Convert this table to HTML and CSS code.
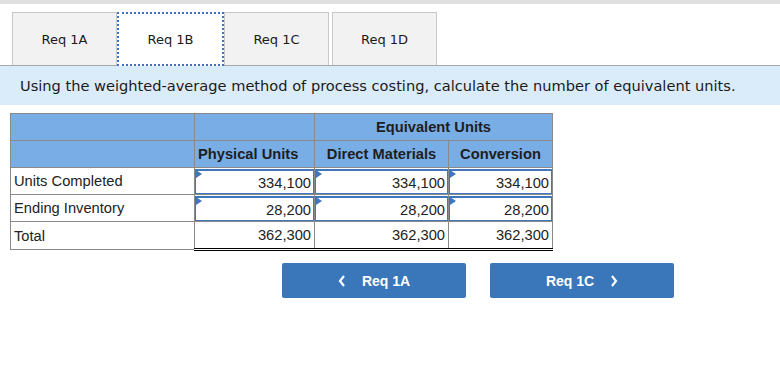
FILE: index.html
```html
<!DOCTYPE html>
<html>
<head>
    <meta charset="UTF-8">
    <title>Req 1B</title>
    <link rel="stylesheet" href="styles.css">
</head>
<body>
    <div class="top-bar"></div>
    <div class="tabs">
        <div class="tab">Req 1A</div>
        <div class="tab active">Req 1B</div>
        <div class="tab">Req 1C</div>
        <div class="tab">Req 1D</div>
    </div>
    <div class="instruction">Using the weighted-average method of process costing, calculate the number of equivalent units.</div>

    <table class="units-table">
        <tr class="head">
            <th class="col-label"></th>
            <th class="col-phys"></th>
            <th colspan="2">Equivalent Units</th>
        </tr>
        <tr class="head">
            <th class="col-label"></th>
            <th class="col-phys">Physical Units</th>
            <th class="col-dm">Direct Materials</th>
            <th class="col-conv">Conversion</th>
        </tr>
        <tr>
            <td class="label">Units Completed</td>
            <td class="entry"><div class="input">334,100</div></td>
            <td class="entry"><div class="input">334,100</div></td>
            <td class="entry"><div class="input">334,100</div></td>
        </tr>
        <tr>
            <td class="label">Ending Inventory</td>
            <td class="entry"><div class="input">28,200</div></td>
            <td class="entry"><div class="input">28,200</div></td>
            <td class="entry"><div class="input">28,200</div></td>
        </tr>
        <tr class="total">
            <td class="label">Total</td>
            <td class="sum">362,300</td>
            <td class="sum">362,300</td>
            <td class="sum">362,300</td>
        </tr>
    </table>

    <div class="nav">
        <button class="nav-btn">
            <svg width="8" height="12" viewBox="0 0 8 12"><polyline points="6,1 2,6 6,11" fill="none" stroke="#fff" stroke-width="2.2"/></svg>
            <span>Req 1A</span>
        </button>
        <button class="nav-btn">
            <span>Req 1C</span>
            <svg width="8" height="12" viewBox="0 0 8 12"><polyline points="2,1 6,6 2,11" fill="none" stroke="#fff" stroke-width="2.2"/></svg>
        </button>
    </div>
</body>
</html>
```

FILE: styles.css
```css
body {
    margin: 0;
    font-family: 'DejaVu Sans', Verdana, sans-serif;
    background-color: #fff;
    color: #222;
}

.top-bar {
    height: 4px;
    background-color: #e0e0e0;
}

.tabs {
    display: flex;
    align-items: flex-start;
    padding: 8px 0 0 12px;
}

.tab {
    width: 103px;
    height: 52px;
    box-sizing: content-box;
    background-color: #f2f2f2;
    border: 1px solid #c8c8c8;
    border-bottom: none;
    display: flex;
    align-items: center;
    justify-content: center;
    font-size: 13px;
    color: #1a1a1a;
}

.tab.active {
    width: 103px;
    height: 50px;
    background-color: #fff;
    border: 2px dotted #3d74bb;
    margin-bottom: -1px;
    position: relative;
    z-index: 1;
}

.tab:nth-child(4) {
    margin-left: 3px;
}

.instruction {
    background-color: #daecf9;
    border-top: 1px solid #a8a8a8;
    height: 39px;
    line-height: 40px;
    padding-left: 20px;
    font-size: 14.6px;
    color: #1a1a1a;
}

.units-table {
    border-collapse: collapse;
    margin: 8px 0 0 10px;
    font-family: 'Liberation Sans', Arial, sans-serif;
    font-size: 14.7px;
}

.units-table th, .units-table td {
    border: 1px solid #8a8a8a;
    height: 26px;
    padding: 0;
}

.units-table th {
    background-color: #79ade5;
    color: #1e1e1e;
    font-weight: bold;
    text-align: center;
}

.units-table th.col-phys {
    text-align: left;
    padding-left: 3px;
}

.col-label { width: 183px; }
.col-phys { width: 116px; }
.col-dm { width: 133px; }
.col-conv { width: 103px; }

.units-table td.label {
    padding-left: 3px;
    color: #222;
}

.input {
    height: 22px;
    line-height: 24px;
    border: 1px solid #3f76bd;
    border-top-width: 2px;
    text-align: right;
    padding-right: 2px;
    color: #222;
    position: relative;
}

.input::before {
    content: '';
    position: absolute;
    left: 0;
    top: -1px;
    border-top: 4px solid transparent;
    border-bottom: 4px solid transparent;
    border-left: 6px solid #3f76bd;
}

.units-table td.sum {
    text-align: right;
    padding-right: 3px;
    border-top: 1px solid #000;
    border-bottom: 3px double #000;
}

.nav {
    display: flex;
    gap: 24px;
    padding: 12px 0 0 282px;
}

.nav-btn {
    width: 184px;
    height: 35px;
    background-color: #3a76ba;
    border: none;
    border-radius: 2px;
    color: #fff;
    font-family: 'Liberation Sans', Arial, sans-serif;
    font-size: 14px;
    font-weight: bold;
    display: flex;
    align-items: center;
    justify-content: center;
    gap: 16px;
    padding: 0;
}
```
